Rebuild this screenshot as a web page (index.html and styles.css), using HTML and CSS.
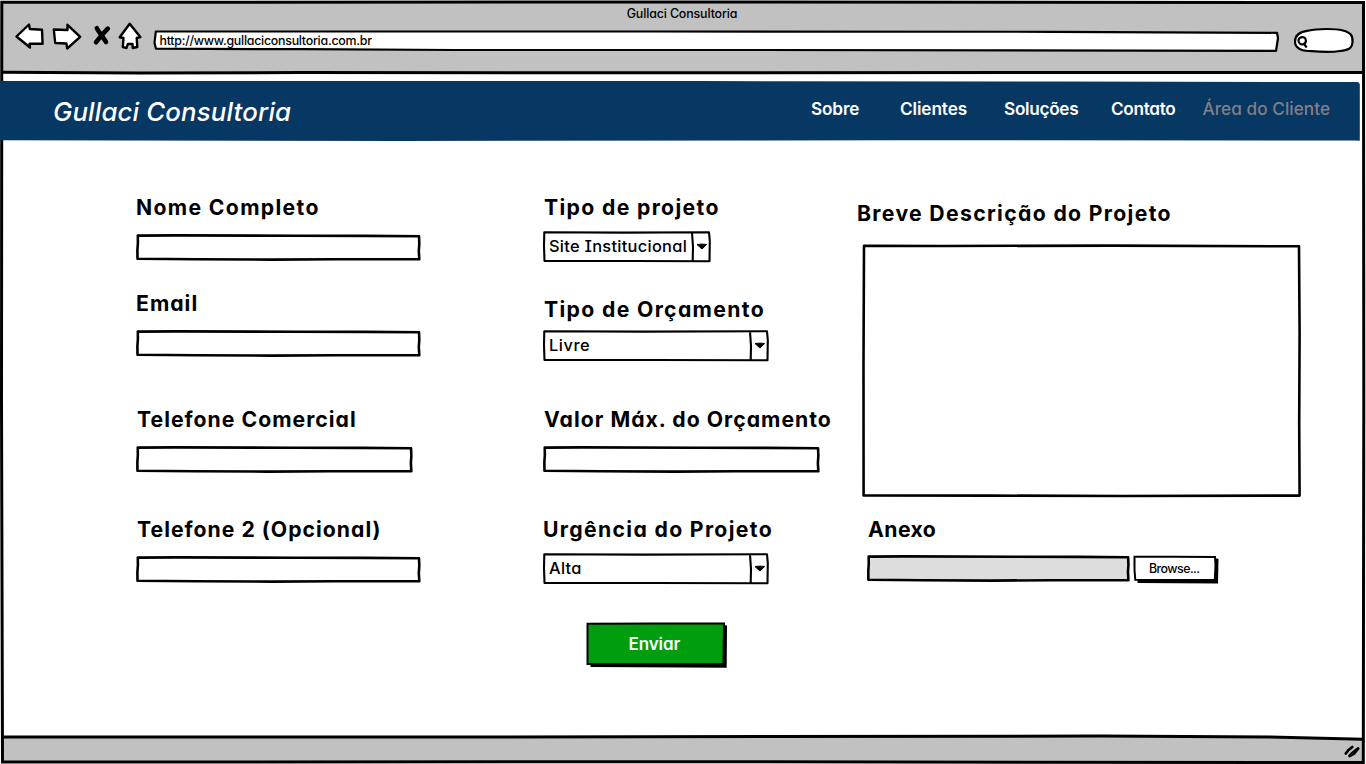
FILE: index.html
```html
<!DOCTYPE html>
<html lang="pt-BR">
<head>
<meta charset="utf-8">
<title>Gullaci Consultoria</title>
<link rel="stylesheet" href="styles.css">
</head>
<body>
<svg class="defs" aria-hidden="true">
  <symbol id="box" viewBox="0 0 285 27" preserveAspectRatio="none">
    <path d="M1.800 1.600L40 1.400L160 1.700L230 1.900L283 2.300L283.300 10L282.800 17L283.300 25.300L200 25.200L135 25.600L60 25.200L1.500 24.700L1.400 16L1.900 9Z" stroke="#000" stroke-width="2.600" stroke-linejoin="round" vector-effect="non-scaling-stroke"/>
  </symbol>
  <symbol id="area" viewBox="0 0 439 254" preserveAspectRatio="none">
    <path d="M2 1.700L80 2L250 1.600L437 2.300L437.600 90L437.200 180L437.600 251.600L260 252L130 251.600L1.600 251.400L1.500 120Z" stroke="#000" stroke-width="2.600" stroke-linejoin="round"/>
  </symbol>
</svg>
<div class="window">
  <svg class="frame" viewBox="0 0 1366 764" fill="none" stroke="#000" stroke-width="3">
    <path d="M3 2.500H1363.500V73H3Z" fill="#c1c1c1" stroke="none"/>
    <path d="M3 736.500L900 736L1160 736L1363 739.500V762H3Z" fill="#c1c1c1" stroke="none"/>
    <path d="M1.800 2.300L700 2L1363.500 2.500L1363.800 400L1363.300 762.500L700 761.800L2.500 762L1.500 400Z"/>
    <path d="M2 72.300L140 73L300 72.600L740 72.800L1364 72.400"/>
    <path d="M2 737L500 737L1100 736L1270 737L1363 739.300"/>
    <path d="M1345.800 753.500L1348.500 750L1352.300 747M1349.500 756L1351.500 753.700L1357.500 748.800M1349.500 756L1354 753.700L1358.300 748.500" stroke-width="2.700" stroke-linecap="round"/>
  </svg>
  <div class="page">
    <header class="toolbar">
      <div class="title">Gullaci Consultoria</div>
      <div class="controls">
        <svg class="icons" viewBox="0 0 134 32" fill="#fff" stroke="#000" stroke-width="2.400" stroke-linejoin="round">
          <path d="M6.500 16.500L19 4.500L19.800 9L32 9.800L32.600 23.800L19.600 23.600L20 27.500Z"/>
          <path d="M43.800 9.500L57.500 10L57.500 4.800L70.200 16.800L57.200 28.500L56.400 23.500L45.200 23Z"/>
          <path d="M86.800 8.200C89 12.500 93.500 17.500 96 22M97.800 8.700C94.500 12 89.500 18 86 22.200" stroke-width="4.600" stroke-linecap="round" fill="none"/>
          <path d="M119.700 3.800L109.700 17.300L113.500 18L112.800 27.200L116.500 28L117.800 24L122.500 24L122.700 28L127.300 27L126.700 18L130.300 17Z"/>
        </svg>
        <div class="sketch address">
          <svg viewBox="0 0 1126 24" fill="#fff" stroke="#000" stroke-width="2.200" stroke-linejoin="round"><path d="M2.800 2.500L500 2.500L900 2.800L1124 3.800L1125 9L1123 21.800L600 21L300 21L150 20.200L3 19.700L1.500 14Z"/></svg>
          <span class="url">http://www.gullaciconsultoria.com.br</span>
        </div>
        <svg class="search" viewBox="0 0 62 28" fill="#fff" stroke="#000" stroke-width="2.200">
          <path d="M15 3.700C25 1.500 42 1.500 50 3.500C58 5.500 60 9 59.500 15C59 22 55 23 47 24C36 25.800 23 24.500 16 24C6 23.500 2 20 2 14.500C2 9 6 5 15 3.700Z"/>
          <path d="M7 10.700C9.500 9.300 12.600 10.200 12.900 13.500C13 17 9 18.400 7 16.700C5.200 15 4.700 12.500 7 10.700M10.500 16L13.700 20.500"/>
        </svg>
      </div>
    </header>
    <nav class="sketch navbar">
      <svg class="nav-bg" viewBox="0 0 1361 60" fill="#073763"><path d="M0 0.100L700 0.100L1060 0.600L1358 1L1359.800 3V59.800L1354 59.400L900 59.300L400 60L0 59.200Z"/></svg>
      <div class="nav-row">
        <span class="brand">Gullaci Consultoria</span>
        <a class="link sobre">Sobre</a>
        <a class="link clientes">Clientes</a>
        <a class="link solucoes">Soluções</a>
        <a class="link contato">Contato</a>
        <a class="link area-cliente">Área do Cliente</a>
      </div>
    </nav>
    <form class="form">
      <div class="columns">
        <div class="column first">
          <div class="field loose"><label>Nome Completo</label>
            <div class="sketch input"><svg><use href="#box"/></svg><input type="text"></div></div>
          <div class="field"><label class="tight">Email</label>
            <div class="sketch input"><svg><use href="#box"/></svg><input type="text"></div></div>
          <div class="field after-email"><label class="tight indent">Telefone Comercial</label>
            <div class="sketch input short"><svg><use href="#box"/></svg><input type="text"></div></div>
          <div class="field after-gap"><label class="tight indent">Telefone 2 (Opcional)</label>
            <div class="sketch input"><svg><use href="#box"/></svg><input type="text"></div></div>
        </div>
        <div class="column second">
          <div class="field project"><label class="indent">Tipo de projeto</label>
            <div class="sketch select narrow">
              <svg viewBox="0 0 168 31" class="outline"><path d="M1.300 1.300L80 1.600L166 1.300L166.800 10L166.500 30.200L90 30L1.500 29.900L1 15ZM149 1.500L150 16L149.700 29.900"/><path class="caret" d="M154 13.600C157 13 161 13 163.600 13.600L159 18Z"/></svg>
              <span class="value">Site Institucional</span></div></div>
          <div class="field budget"><label class="indent">Tipo de Orçamento</label>
            <div class="sketch select">
              <svg viewBox="0 0 226 31" class="outline"><path d="M1.300 1.300L100 1.600L224 1.300L224.800 10L224.500 30.200L110 30L1.500 29.900L1 15ZM207 1.500L208 16L207.700 29.900"/><path class="caret" d="M212 13.600C215 13 219 13 221.600 13.600L217 18Z"/></svg>
              <span class="value livre">Livre</span></div></div>
          <div class="field max"><label class="tight indent">Valor Máx. do Orçamento</label>
            <div class="sketch input short"><svg><use href="#box"/></svg><input type="text"></div></div>
          <div class="field after-gap urgency"><label>Urgência do Projeto</label>
            <div class="sketch select">
              <svg viewBox="0 0 226 31" class="outline"><path d="M1.300 1.300L100 1.600L224 1.300L224.800 10L224.500 30.200L110 30L1.500 29.900L1 15ZM207 1.500L208 16L207.700 29.900"/><path class="caret" d="M212 13.600C215 13 219 13 221.600 13.600L217 18Z"/></svg>
              <span class="value alta">Alta</span></div></div>
        </div>
        <div class="column third">
          <div class="field description"><label>Breve Descrição do Projeto</label>
            <div class="sketch textarea"><svg><use href="#area"/></svg><textarea></textarea></div></div>
          <div class="field attachment"><label class="tighter">Anexo</label>
            <div class="file-row">
              <div class="sketch file"><svg><use href="#box"/></svg></div>
              <div class="sketch browse">
                <svg viewBox="0 0 86 30"><path d="M5 3L84 3.500L85.500 4L85 28.500L4.500 28Z"/><path d="M1.500 1.700L40 1.800L82 2L82.500 10L81.800 25L40 25L2.300 24.800L1.500 15Z" fill="#fff" stroke="#000" stroke-width="2"/></svg>
                <span>Browse...</span></div>
            </div></div>
        </div>
      </div>
      <div class="sketch submit">
        <svg viewBox="0 0 142 46"><path d="M4 3L138 3L141 3.500L140.700 45.800L4.500 45Z"/><path d="M1.500 1.700L70 1.500L138 1.500L137.500 42L70 42L1.500 42Z" fill="#009e0f" stroke="#000" stroke-width="2"/></svg>
        <span>Enviar</span>
      </div>
    </form>
  </div>
</div>
</body>
</html>
```
FILE: styles.css
```css
body { margin: 0; background: #fff; color: #000; font-family: Inter, sans-serif; font-feature-settings: "cv11"; font-weight: 500; }
svg { display: block; }
.defs { position: absolute; width: 0; height: 0; }
.window { display: grid; width: 1366px; height: 764px; overflow: hidden; }
.window > *, .sketch > * { grid-area: 1 / 1; }
.frame { width: 1366px; height: 764px; }
.sketch { display: grid; }

.page { display: flex; flex-direction: column; }
.toolbar { height: 81px; }
.title { height: 24px; padding-right: 2px; text-align: center; font-size: 12.4px; line-height: 27px; letter-spacing: -0.12px; }
.controls { display: flex; }
.icons { width: 134px; height: 32px; margin: -4px 0 0 10px; }
.address { width: 1126px; height: 24px; margin: 5px 0 0 9px; }
.address svg { width: 1126px; height: 24px; }
.url { padding-left: 6.500px; font-size: 12.4px; line-height: 23px; letter-spacing: -0.26px; }
.search { width: 62px; height: 28px; margin: 3px 0 0 14px; }

.navbar { height: 60px; color: #fff; }
.nav-bg { width: 1361px; height: 60px; }
.nav-row { display: flex; height: 60px; font-size: 17.2px; line-height: 56px; font-weight: 600; white-space: nowrap; }
.brand { width: 757px; padding-left: 53px; box-sizing: border-box; margin-right: 54px; font-size: 25.8px; line-height: 61px; font-style: italic; font-weight: 500; letter-spacing: 0.15px; }
.sobre { width: 89px; letter-spacing: -0.15px; }
.clientes { width: 104px; letter-spacing: -0.1px; }
.solucoes { width: 107px; letter-spacing: -0.3px; }
.contato { width: 92px; letter-spacing: -0.3px; }
.area-cliente { margin-left: -0.500px; color: #837f86; font-weight: 500; letter-spacing: 0.05px; }

.form { padding-top: 52px; }
.columns { display: flex; height: 429px; padding-left: 136px; }
.column { display: flex; flex-direction: column; }
.first { width: 407px; }
.second { width: 314px; }
.field label { display: block; height: 30px; margin-bottom: 11px; font-size: 21.2px; line-height: 28px; font-weight: 670; letter-spacing: 1.34px; white-space: nowrap; }
.field label.tight { letter-spacing: 1.02px; }
.field label.tighter { letter-spacing: 0.45px; }
.field label.indent { padding-left: 1px; }
.loose { margin-bottom: 28px; }
.after-email { margin-top: 48px; }
.after-gap { margin-top: 42px; }

.input, .input svg { width: 285px; height: 27px; fill: #fff; }
.short, .short svg { width: 277px; }
.input input, .textarea textarea { box-sizing: border-box; margin: 0; padding: 4px 6px; border: 0; outline: 0; resize: none; background: transparent; font: inherit; }
.select { width: 226px; height: 31px; }
.narrow { width: 168px; }
.outline { width: 100%; height: 31px; overflow: visible; fill: #fff; stroke: #000; stroke-width: 2.1; stroke-linejoin: round; }
.outline .caret { fill: #000; stroke-width: 1; }
.value { padding-left: 6px; font-size: 16.4px; line-height: 30px; font-weight: 450; letter-spacing: 0.28px; font-feature-settings: "cv11", "cv08"; }
.livre { letter-spacing: 0.55px; }
.project label, .urgency label { margin-bottom: 8px; }
.project { margin-bottom: 33px; }
.budget label { margin-bottom: 5px; }
.max { margin-top: 44px; }

.description { padding-top: 6px; }
.description label { margin-bottom: 15px; }
.textarea { margin-left: 5px; }
.textarea, .textarea svg { width: 439px; height: 254px; fill: #fff; }
.attachment { padding-left: 11px; margin-top: 17px; }
.attachment label { margin-bottom: 10px; }
.file-row { display: flex; gap: 3px; margin-left: -1px; }
.file, .file svg { width: 263px; height: 27px; fill: #ddd; }
.browse, .browse svg { width: 86px; height: 30px; }
.browse span { padding-left: 16px; font-size: 12.4px; line-height: 27px; letter-spacing: -0.55px; }
.submit { width: 142px; height: 46px; margin-left: 585.500px; color: #fff; }
.submit svg { width: 142px; height: 46px; fill: #000; }
.submit span { padding-left: 43px; font-size: 17px; line-height: 44px; font-weight: 600; letter-spacing: -0.1px; }
```
